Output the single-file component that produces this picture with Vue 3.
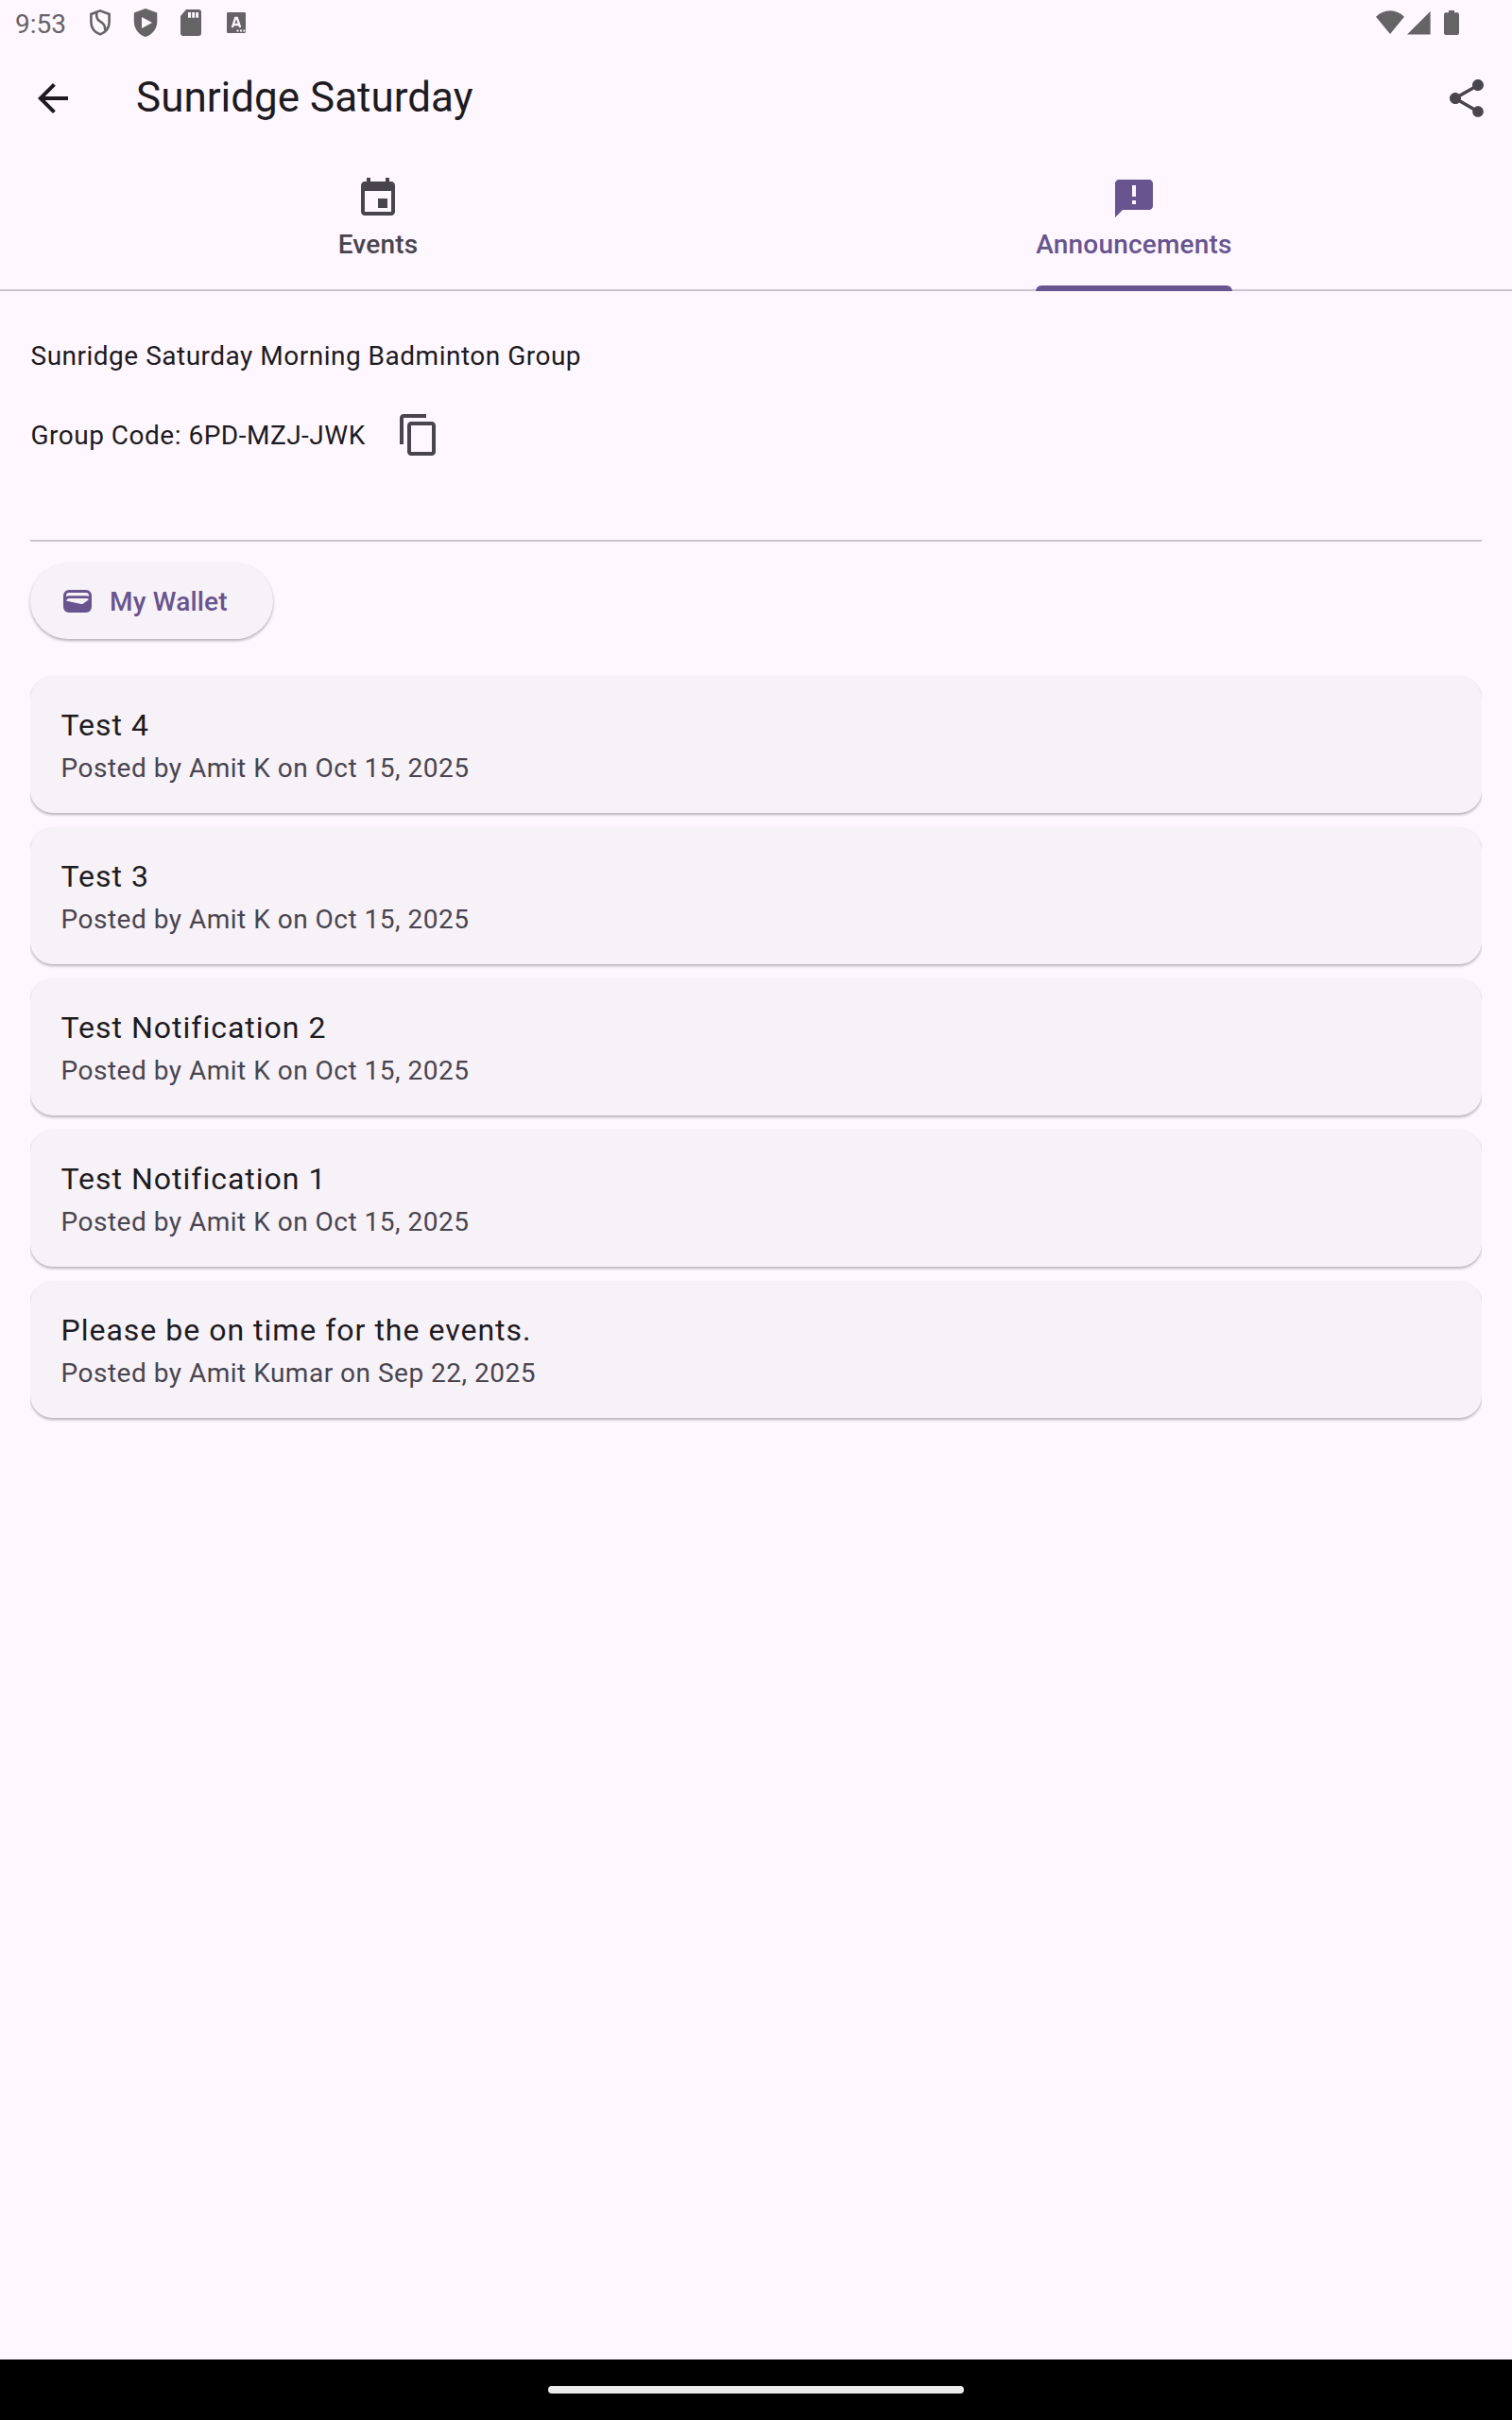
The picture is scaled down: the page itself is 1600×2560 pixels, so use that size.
<script setup>
const announcements = [
  { title: 'Test 4', meta: 'Posted by Amit K on Oct 15, 2025' },
  { title: 'Test 3', meta: 'Posted by Amit K on Oct 15, 2025' },
  { title: 'Test Notification 2', meta: 'Posted by Amit K on Oct 15, 2025' },
  { title: 'Test Notification 1', meta: 'Posted by Amit K on Oct 15, 2025' },
  { title: 'Please be on time for the events.', meta: 'Posted by Amit Kumar on Sep 22, 2025' },
]
</script>

<template>
  <div class="screen">
    <div class="status">
      <span class="clock">9:53</span>
      <svg class="notifications" width="180" height="48" viewBox="0 0 180 48">
        <g fill="none" stroke="#666367" stroke-width="2.6">
          <path d="M16 11.4 25.6 15V23.5C25.6 29.5 21.8 34.2 16 36.4C10.2 34.2 6.4 29.5 6.4 23.5V15Z" />
          <path d="M12.4 13.2C11.4 18 12.5 20.3 15.6 22.4C19.8 25 21.6 27 21.2 32.5" />
        </g>
        <g fill="#666367">
          <path fill-rule="evenodd" d="M64 9 76.3 13.6V23C76.3 30.5 71 36.8 64 39C57 36.8 51.8 30.5 51.8 23V13.6ZM60 18V30L71 24Z" />
          <path fill-rule="evenodd" d="M107 10H120Q123 10 123 13V35Q123 38 120 38H104Q101 38 101 35V17ZM109 13V18.7H112V13ZM113.2 13V18.7H116V13ZM117.2 13V18.7H120V13Z" />
          <rect x="150" y="13" width="20" height="22" rx="1.2" />
        </g>
        <path d="M155.8 29 159.2 19H160.8L164.2 29M157.2 26H162.8" fill="none" stroke="#fef7ff" stroke-width="2.3" />
        <path d="M160.5 31.5h2v2h-2zM164 31.5h2v2h-2zM167.3 31.5h2v2h-2z" fill="#fef7ff" />
      </svg>
      <svg class="system" width="90" height="48" viewBox="0 0 90 48" fill="#666367">
        <path d="M0 17.8Q6.5 11.3 15 11.3T30 17.8L15 36Z" />
        <path d="M57.6 12V36.5H33Z" />
        <path d="M77 11H83V13.3H86Q88 13.3 88 15.3V35Q88 37 86 37H74Q72 37 72 35V15.3Q72 13.3 74 13.3H77Z" />
      </svg>
    </div>

    <header class="appbar">
      <svg class="icon back" viewBox="0 0 24 24"><path d="M20 11H7.83l5.59-5.59L12 4l-8 8 8 8 1.41-1.41L7.83 13H20v-2z" /></svg>
      <h1>Sunridge Saturday</h1>
      <svg class="icon share" viewBox="0 0 24 24"><path d="M18 16.08c-.76 0-1.44.3-1.96.77L8.91 12.7c.05-.23.09-.46.09-.7s-.04-.47-.09-.7l7.05-4.11c.54.5 1.25.81 2.04.81 1.66 0 3-1.34 3-3s-1.34-3-3-3-3 1.34-3 3c0 .24.04.47.09.7L8.04 9.81C7.5 9.31 6.79 9 6 9c-1.66 0-3 1.34-3 3s1.34 3 3 3c.79 0 1.5-.31 2.04-.81l7.12 4.16c-.05.21-.08.43-.08.65 0 1.61 1.31 2.92 2.92 2.92s2.92-1.31 2.92-2.92-1.31-2.92-2.92-2.92z" /></svg>
    </header>

    <nav class="tabs">
      <div class="tab">
        <div class="tab-body">
          <svg class="icon" viewBox="0 0 24 24"><path d="M17 12h-5v5h5v-5zM16 1v2H8V1H6v2H5c-1.11 0-1.99.9-1.99 2L3 19c0 1.1.89 2 2 2h14c1.1 0 2-.9 2-2V5c0-1.1-.9-2-2-2h-1V1h-2zm3 18H5V8h14v11z" /></svg>
          <span>Events</span>
        </div>
      </div>
      <div class="tab active">
        <div class="tab-body">
          <svg class="icon" viewBox="0 0 24 24"><path d="M20 2H4c-1.1 0-1.99.9-1.99 2L2 22l4-4h14c1.1 0 2-.9 2-2V4c0-1.1-.9-2-2-2zm-7 9h-2V5h2v6zm0 4h-2v-2h2v2z" /></svg>
          <span>Announcements</span>
        </div>
      </div>
    </nav>

    <main>
      <p class="text">Sunridge Saturday Morning Badminton Group</p>
      <div class="code">
        <p class="text">Group Code: 6PD-MZJ-JWK</p>
        <svg class="icon" viewBox="0 0 24 24"><path d="M16 1H4c-1.1 0-2 .9-2 2v14h2V3h12V1zm3 4H8c-1.1 0-2 .9-2 2v14c0 1.1.9 2 2 2h11c1.1 0 2-.9 2-2V7c0-1.1-.9-2-2-2zm0 16H8V7h11v14z" /></svg>
      </div>
      <hr />
      <button class="wallet">
        <svg width="30" height="24" viewBox="0 0 30 24">
          <rect width="30" height="24" rx="6" fill="#68548e" />
          <path d="M3 7V6Q3 3 6 3H24Q27 3 27 6V7Q26 6.3 24 6.3H6Q4 6.3 3 7Z" fill="#f7f1f8" />
          <path d="M3 11.5Q3.6 9 6 9H24Q26 9 27 10.3L21 14.4Q20 15.1 18.8 14.9Z" fill="#f7f1f8" />
        </svg>
        <span>My Wallet</span>
      </button>
      <ul>
        <li v-for="item in announcements" :key="item.title">
          <h2>{{ item.title }}</h2>
          <p>{{ item.meta }}</p>
        </li>
      </ul>
    </main>

    <footer><div class="handle"></div></footer>
  </div>
</template>

<style>
body {
  background: #fef7ff;
}
</style>

<style scoped>
.screen {
  display: flex;
  flex-direction: column;
  width: 1600px;
  height: 2560px;
  overflow: hidden;
  background: #fef7ff;
  color: #1d1b20;
  font-family: Roboto, sans-serif;
}
h1, h2, p, ul {
  margin: 0;
  padding: 0;
  font-weight: 400;
}
svg {
  display: block;
  flex: none;
}
.icon {
  width: 48px;
  height: 48px;
  fill: #49454e;
}
.status {
  display: flex;
  height: 48px;
  padding: 0 54px 0 16px;
}
.clock {
  width: 74px;
  color: #666367;
  font-size: 28px;
  line-height: 51px;
}
.system {
  margin-left: auto;
}
.appbar {
  display: flex;
  align-items: center;
  height: 112px;
  padding: 0 24px 0 32px;
}
.appbar .back {
  fill: #1d1b20;
}
h1 {
  flex: 1;
  margin: -2px 0 0 64px;
  font-size: 44px;
  line-height: 56px;
}
.tabs {
  display: flex;
  height: 146px;
  border-bottom: 2px solid #cbc4cf;
}
.tab {
  display: flex;
  flex: 1;
  justify-content: center;
  color: #49454e;
}
.tab-body {
  display: flex;
  flex-direction: column;
  align-items: center;
  height: 148px;
  padding-top: 26px;
  box-sizing: border-box;
  font-size: 28px;
  font-weight: 500;
  line-height: 40px;
  letter-spacing: 0.2px;
}
.tab-body span {
  margin-top: 5px;
}
.active {
  color: #68548e;
}
.active .icon {
  fill: #68548e;
}
.active .tab-body::after {
  content: '';
  width: 100%;
  height: 6px;
  margin-top: auto;
  border-radius: 6px 6px 0 0;
  background: #68548e;
}
main {
  flex: 1;
  padding: 48px 32px 0;
}
.text {
  padding: 1px 0 0 0.5px;
  font-size: 28px;
  line-height: 40px;
  letter-spacing: 0.5px;
}
.code {
  display: flex;
  align-items: center;
  gap: 32px;
  height: 96px;
  margin-top: 15px;
}
.code .text {
  padding-top: 2px;
}
hr {
  height: 2px;
  margin: 63px 0 23px;
  border: 0;
  background: #cbc4cf;
}
.wallet {
  display: flex;
  align-items: center;
  gap: 19px;
  width: 257px;
  height: 80px;
  padding: 0 0 0 35px;
  border: 0;
  border-radius: 40px;
  background: #f7f1f8;
  box-shadow: 0 2px 3px rgba(0, 0, 0, 0.24), 0 1px 4px rgba(0, 0, 0, 0.08);
  color: #68548e;
  font: 500 28px/40px Roboto, sans-serif;
  letter-spacing: 0.2px;
}
.wallet span {
  padding-top: 2px;
}
ul {
  display: flex;
  flex-direction: column;
  gap: 16px;
  margin-top: 40px;
  list-style: none;
  clip-path: inset(-8px 0);
}
li {
  height: 144px;
  padding: 27px 32px 0 32.5px;
  box-sizing: border-box;
  border-radius: 24px;
  background: #f7f1f8;
  box-shadow: 0 2px 3px rgba(0, 0, 0, 0.24), 0 1px 4px rgba(0, 0, 0, 0.08);
}
h2 {
  font-size: 32px;
  line-height: 48px;
  letter-spacing: 1px;
}
li p {
  margin-top: 2px;
  color: #49454e;
  font-size: 28px;
  line-height: 40px;
  letter-spacing: 0.5px;
}
footer {
  display: flex;
  align-items: center;
  justify-content: center;
  height: 64px;
  background: #000;
}
.handle {
  width: 440px;
  height: 8px;
  border-radius: 4px;
  background: #ebebeb;
}
</style>
